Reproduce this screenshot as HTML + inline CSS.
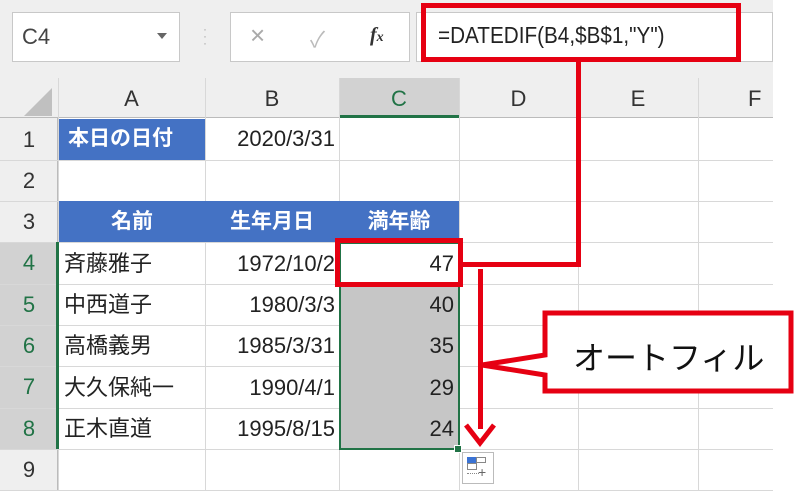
<!DOCTYPE html>
<html><head><meta charset="utf-8"><style>
*{margin:0;padding:0;box-sizing:border-box}
body{width:800px;height:502px;background:#fff;position:relative;overflow:hidden;font-family:"Liberation Sans","Noto Sans CJK JP",sans-serif}
.a{position:absolute}
.c{position:absolute;font-size:22px;line-height:41px;color:#222;white-space:nowrap}
.hl{position:absolute;background:#d8d8d8}
.vl{position:absolute;width:1px;background:#d8d8d8}
.rh{position:absolute;left:0;width:58px;text-align:center;font-size:22px;color:#333}
.ch{position:absolute;top:78px;height:40px;line-height:42px;text-align:center;font-size:22px;color:#333}
.red{position:absolute;background:#e60012}
</style></head><body>
<div class="a" style="left:0;top:0;width:773px;height:118px;background:#efefef"></div>
<div class="a" style="left:12px;top:12px;width:168px;height:50px;background:#fff;border:1px solid #c8c8c8"></div>
<div class="a" style="left:22px;top:24px;font-size:22px;color:#444">C4</div>
<div class="a" style="left:157px;top:33px;width:0;height:0;border-left:5px solid transparent;border-right:5px solid transparent;border-top:6px solid #666"></div>
<div class="a" style="left:203px;top:26px;color:#aaa;font-size:12px;line-height:7px">·<br>·<br>·</div>
<div class="a" style="left:230px;top:12px;width:180px;height:50px;background:#fff;border:1px solid #c8c8c8"></div>
<div class="a" style="left:250px;top:20px;font-size:26px;color:#aaa">×</div>
<div class="a" style="left:310px;top:22px;font-size:22px;color:#bbb">✓</div>
<div class="a" style="left:370px;top:24px;font-size:20px;color:#333;font-family:'Liberation Serif',serif;font-style:italic;font-weight:bold">f<span style="font-size:14px">x</span></div>
<div class="a" style="left:416px;top:12px;width:357px;height:50px;background:#fff;border:1px solid #c8c8c8"></div>
<div class="a" style="left:438px;top:22px;font-size:23px;color:#222;transform:scaleX(0.9);transform-origin:left">=DATEDIF(B4,$B$1,"Y")</div>
<!-- grid -->
<div class="a" style="left:0;top:78px;width:773px;height:40px;background:#efefef;border-bottom:1px solid #bbb"></div>
<div class="a" style="left:0;top:118px;width:58px;height:372px;background:#efefef;border-right:1px solid #bbb"></div>
<div class="a" style="left:24px;top:88px;width:0;height:0;border-left:28px solid transparent;border-bottom:28px solid #c0c0c0"></div>
<div class="a" style="left:339px;top:78px;width:120px;height:40px;background:#d2d2d2;border-bottom:3px solid #217346"></div>
<div class="a" style="left:0;top:242px;width:58px;height:207px;background:#d2d2d2"></div>
<div class="ch" style="left:58px;width:147px">A</div>
<div class="ch" style="left:205px;width:134px">B</div>
<div class="ch" style="left:339px;width:120px;color:#217346">C</div>
<div class="ch" style="left:459px;width:119px">D</div>
<div class="ch" style="left:578px;width:120px">E</div>
<div class="ch" style="left:698px;width:120px;text-align:left;padding-left:50px">F</div>
<div class="vl" style="left:58px;top:78px;height:412px"></div>
<div class="vl" style="left:205px;top:78px;height:412px"></div>
<div class="vl" style="left:339px;top:78px;height:412px"></div>
<div class="vl" style="left:459px;top:78px;height:412px"></div>
<div class="vl" style="left:578px;top:78px;height:412px"></div>
<div class="vl" style="left:698px;top:78px;height:412px"></div>
<div class="hl" style="left:0;top:160px;width:773px;height:1px"></div>
<div class="hl" style="left:0;top:201px;width:773px;height:1px"></div>
<div class="hl" style="left:0;top:242px;width:773px;height:1px"></div>
<div class="hl" style="left:0;top:284px;width:773px;height:1px"></div>
<div class="hl" style="left:0;top:325px;width:773px;height:1px"></div>
<div class="hl" style="left:0;top:366px;width:773px;height:1px"></div>
<div class="hl" style="left:0;top:408px;width:773px;height:1px"></div>
<div class="hl" style="left:0;top:449px;width:773px;height:1px"></div>
<div class="hl" style="left:0;top:490px;width:773px;height:1px"></div>
<div class="rh" style="top:119px;line-height:41px">1</div>
<div class="rh" style="top:160px;line-height:41px">2</div>
<div class="rh" style="top:201px;line-height:41px">3</div>
<div class="rh" style="top:242px;line-height:42px;color:#217346">4</div>
<div class="rh" style="top:284px;line-height:41px;color:#217346">5</div>
<div class="rh" style="top:325px;line-height:41px;color:#217346">6</div>
<div class="rh" style="top:366px;line-height:42px;color:#217346">7</div>
<div class="rh" style="top:408px;line-height:41px;color:#217346">8</div>
<div class="rh" style="top:449px;line-height:41px">9</div>
<div class="a" style="left:56px;top:242px;width:3px;height:207px;background:#217346"></div>
<!-- cells -->
<div class="a" style="left:59px;top:119px;width:146px;height:41px;background:#4472c4"></div>
<div class="c" style="left:68px;top:118px;color:#fff;font-weight:bold;font-size:21px">本日の日付</div>
<div class="c" style="left:205px;top:118px;width:130px;text-align:right">2020/3/31</div>
<div class="a" style="left:59px;top:201px;width:400px;height:41px;background:#4472c4"></div>
<div class="c" style="left:59px;top:201px;width:146px;text-align:center;color:#fff;font-weight:bold;font-size:21px">名前</div>
<div class="c" style="left:205px;top:201px;width:134px;text-align:center;color:#fff;font-weight:bold;font-size:21px">生年月日</div>
<div class="c" style="left:339px;top:201px;width:120px;text-align:center;color:#fff;font-weight:bold;font-size:21px">満年齢</div>
<div class="a" style="left:339px;top:284px;width:120px;height:165px;background:#c6c6c6"></div>
<div class="a" style="left:339px;top:242px;width:121px;height:208px;border:2px solid #217346"></div>
<div class="a" style="left:454px;top:445px;width:8px;height:8px;background:#217346;border:1px solid #fff"></div>
<div class="c" style="left:64px;top:243px">斉藤雅子</div>
<div class="c" style="left:64px;top:284px">中西道子</div>
<div class="c" style="left:64px;top:325px">高橋義男</div>
<div class="c" style="left:64px;top:367px">大久保純一</div>
<div class="c" style="left:64px;top:408px">正木直道</div>
<div class="c" style="left:205px;top:243px;width:130px;text-align:right;overflow:hidden;direction:rtl">1972/10/2</div>
<div class="c" style="left:205px;top:284px;width:130px;text-align:right">1980/3/3</div>
<div class="c" style="left:205px;top:325px;width:130px;text-align:right">1985/3/31</div>
<div class="c" style="left:205px;top:367px;width:130px;text-align:right">1990/4/1</div>
<div class="c" style="left:205px;top:408px;width:130px;text-align:right">1995/8/15</div>
<div class="c" style="left:339px;top:243px;width:115px;text-align:right">47</div>
<div class="c" style="left:339px;top:284px;width:115px;text-align:right">40</div>
<div class="c" style="left:339px;top:325px;width:115px;text-align:right">35</div>
<div class="c" style="left:339px;top:367px;width:115px;text-align:right">29</div>
<div class="c" style="left:339px;top:408px;width:115px;text-align:right">24</div>
<!-- autofill icon -->
<div class="a" style="left:462px;top:452px;width:32px;height:32px;background:#fff;border:1px solid #bbb"></div>
<div class="a" style="left:467px;top:457px;width:9px;height:6px;background:#3b73d4"></div>
<div class="a" style="left:476px;top:457px;width:10px;height:6px;border:1px solid #888"></div>
<div class="a" style="left:467px;top:463px;width:10px;height:7px;border:1px solid #888"></div>
<div class="a" style="left:467px;top:473px;width:12px;border-top:1px dotted #888"></div>
<div class="a" style="left:478px;top:465px;font-size:14px;color:#666;line-height:14px">+</div>
<!-- red annotations -->
<div class="a" style="left:421px;top:3px;width:320px;height:59px;border:5px solid #e60012"></div>
<div class="a" style="left:335px;top:238px;width:128px;height:49px;border:5px solid #e60012"></div>
<div class="red" style="left:576px;top:60px;width:5px;height:206px"></div>
<div class="red" style="left:462px;top:262px;width:119px;height:5px"></div>
<div class="red" style="left:478px;top:269px;width:5px;height:160px"></div>
<svg class="a" style="left:462px;top:415px" width="36" height="32"><path d="M4 10 L18 28 L32 10" fill="none" stroke="#e60012" stroke-width="5"/></svg>
<svg class="a" style="left:478px;top:305px" width="322" height="95"><path d="M67 8 H313 V86 H67 V70 L4 60 L67 50 Z" fill="#fff" stroke="#e60012" stroke-width="5"/></svg>
<div class="a" style="left:573px;top:333px;font-size:32px;color:#111;white-space:nowrap">オートフィル</div>
</body></html>
